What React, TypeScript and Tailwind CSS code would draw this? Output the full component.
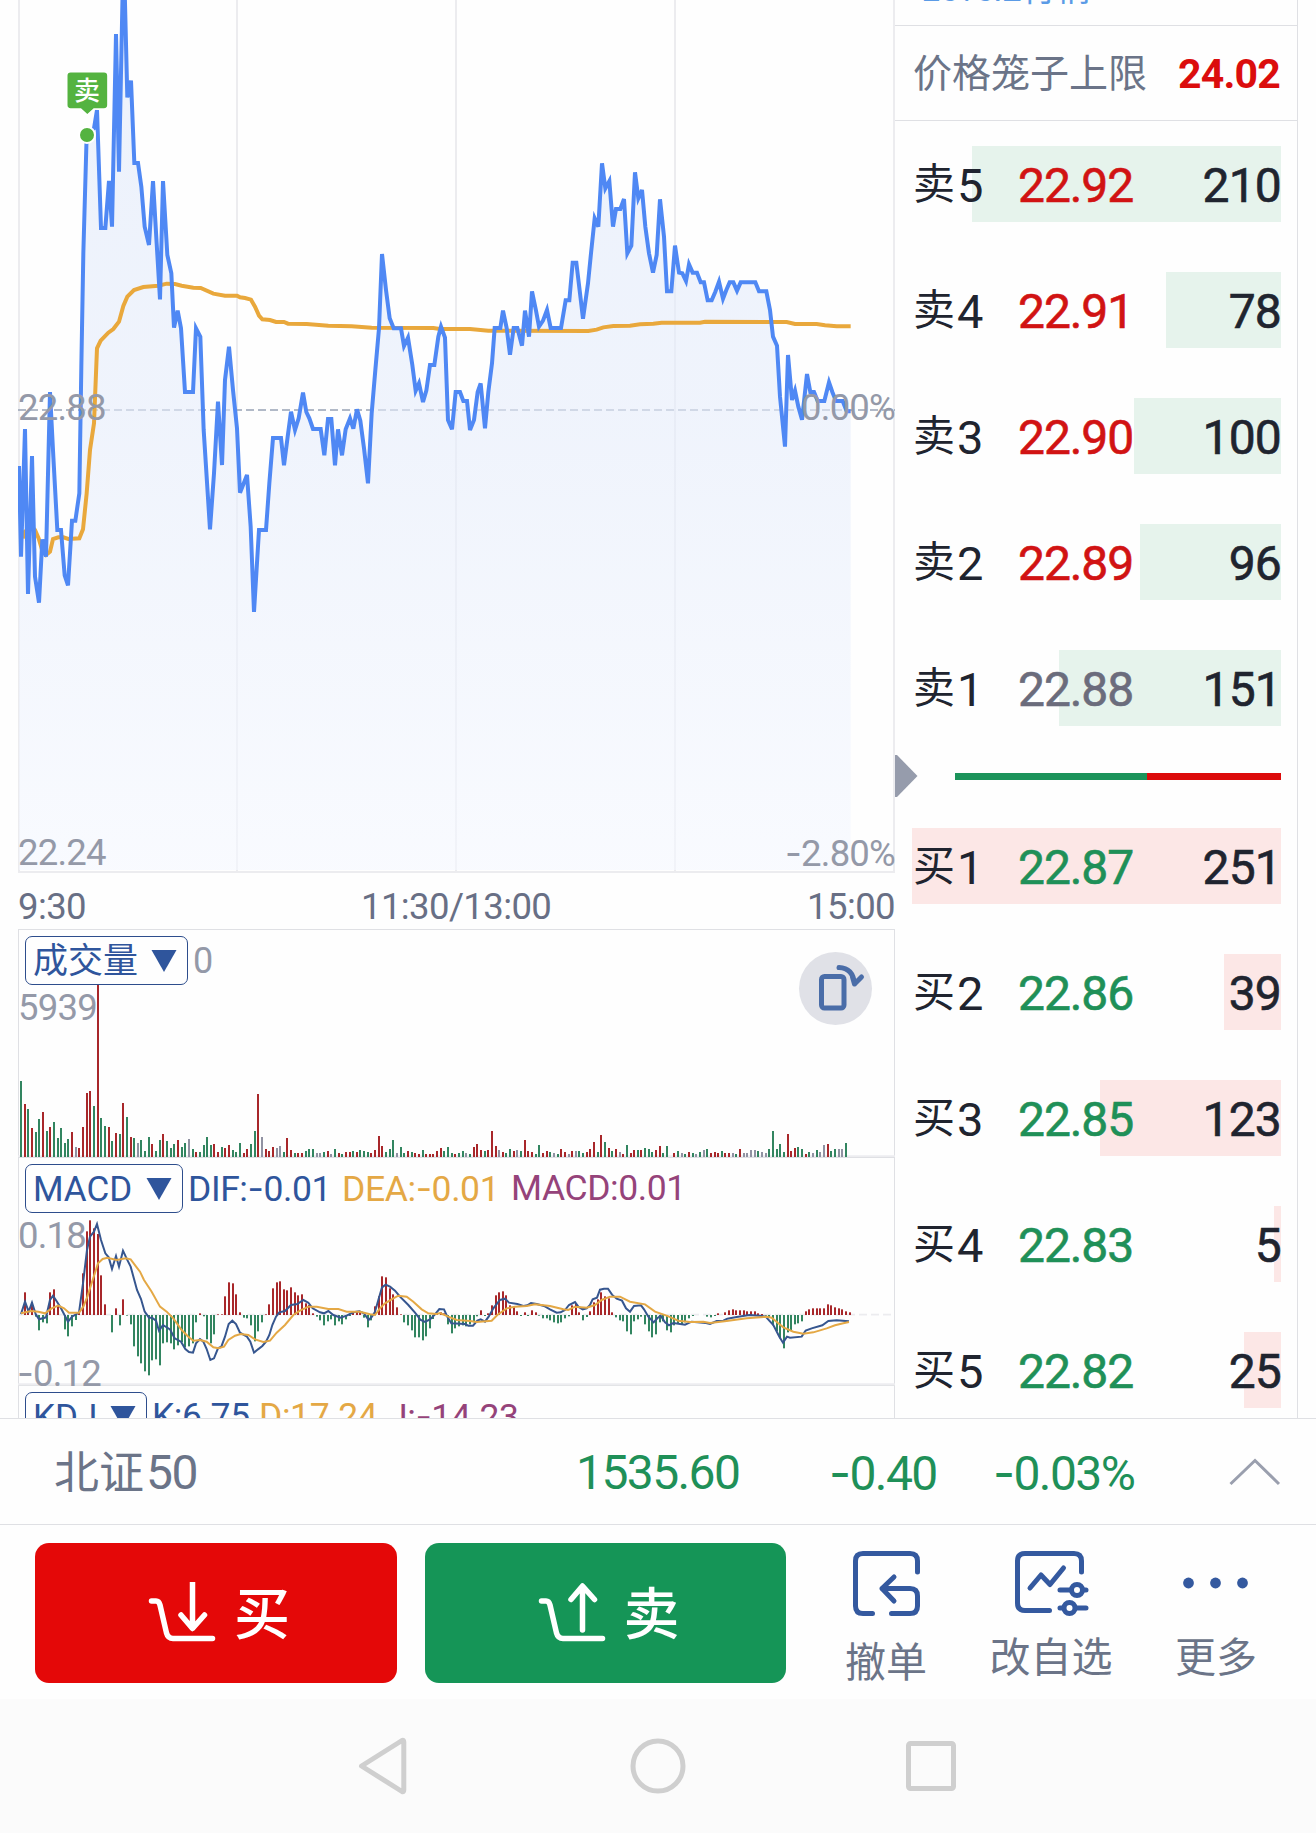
import type { ReactNode } from "react";
import clsx from "clsx";

// Chart data is kept in a 3x pixel space, the svg viewBoxes scale it down.
const PRICE =
  "57,1398 63,1670 75,1287 84,1782 96,1368 105,1730 117,1808 127,1618 138,1670 150,1176 160,1370 172,1590 183,1590 194,1726 204,1756 216,1562 226,1562 238,1480 244,1100 250,760 260,405 282,385 291,330 303,684 316,684 327,543 336,680 348,102 357,515 368,-30 374,-30 382,292 393,242 403,489 414,489 424,560 434,680 447,735 459,543 470,730 480,898 489,543 502,765 514,820 522,983 533,932 543,985 555,1176 579,1176 588,985 601,1010 611,1290 630,1588 642,1420 654,1205 666,1395 675,1140 687,1040 699,1170 711,1285 720,1478 741,1425 752,1580 762,1836 777,1590 798,1590 808,1450 819,1314 843,1314 852,1396 863,1310 873,1235 885,1290 896,1255 909,1178 919,1236 928,1255 939,1287 962,1287 973,1366 984,1257 994,1257 1005,1396 1014,1288 1026,1366 1037,1288 1050,1255 1060,1286 1071,1228 1081,1262 1092,1345 1104,1450 1115,1240 1126,1110 1137,985 1146,762 1158,870 1169,955 1181,985 1203,985 1212,1038 1224,1013 1237,1095 1247,1172 1257,1150 1269,1206 1279,1172 1290,1095 1303,1095 1315,1010 1323,980 1335,1013 1344,1260 1356,1288 1367,1176 1380,1176 1390,1203 1401,1203 1410,1290 1422,1260 1433,1176 1442,1150 1455,1285 1465,1176 1476,1090 1484,984 1501,984 1509,932 1520,984 1530,1064 1541,984 1552,984 1566,1037 1575,932 1587,1010 1596,874 1608,932 1617,980 1629,962 1641,930 1652,984 1683,984 1697,901 1708,901 1718,788 1729,788 1740,880 1749,956 1764,850 1773,760 1784,655 1795,680 1806,490 1816,565 1828,543 1839,680 1848,627 1861,627 1872,597 1882,760 1894,737 1905,517 1915,595 1926,570 1936,680 1947,760 1959,818 1970,765 1980,598 1992,710 2001,874 2014,874 2025,737 2037,818 2047,820 2058,843 2067,793 2078,818 2091,818 2102,847 2112,847 2123,901 2135,901 2146,875 2157,845 2169,896 2179,870 2189,847 2200,847 2211,872 2222,847 2266,847 2277,874 2299,874 2310,930 2319,1010 2331,1037 2340,1190 2355,1340 2364,1065 2376,1200 2385,1172 2395,1220 2406,1259 2421,1122 2431,1176 2442,1176 2453,1203 2473,1203 2487,1147 2497,1176 2508,1203 2528,1203 2540,1234 2552,1234";

const AVERAGE =
  "68,1615 75,1595 96,1582 105,1590 116,1615 127,1652 138,1665 150,1655 159,1617 175,1612 190,1612 205,1617 238,1615 249,1588 260,1480 270,1350 282,1270 291,1045 302,1022 325,998 340,987 357,965 370,918 382,890 402,870 430,861 475,857 500,851 525,852 545,857 580,863 602,864 640,881 675,887 711,887 720,892 735,894 753,899 765,920 777,947 787,958 810,960 828,966 852,966 864,971 920,972 985,977 1055,979 1115,983 1300,984 1320,987 1410,987 1465,992 1765,993 1790,989 1810,982 1840,978 1890,977 1920,973 1960,971 1985,968 2100,968 2115,965 2360,966 2385,972 2450,972 2475,976 2510,979 2552,979";

// r = up, g = down, n = flat
const VOLUME =
  "g228 r159 g144 r87 g75 g114 r135 g78 r90 g105 g57 g87 g42 g54 r75 n30 r27 r90 r192 r198 g153 r516 g117 g93 r90 g48 r72 g69 r162 g120 r60 g57 n42 g51 g18 g60 r39 g18 g51 r69 g48 g27 g39 r51 g30 g42 n54 g24 r15 g15 g36 g60 g36 r39 r15 g30 r27 r36 g21 g15 g42 r12 r24 g39 g78 r189 n60 r24 r18 r30 n27 n33 g15 r57 r21 g12 r12 r12 g18 g24 g24 n12 n12 g15 r18 n9 g24 r12 g9 r15 r15 g18 r15 g21 g18 g15 r12 r21 r63 r33 g15 g24 g51 n12 g30 g12 r18 g15 r12 r9 g21 r9 r9 r9 r18 r27 g18 g30 g12 r9 g12 g18 n12 g9 r30 r39 r21 g18 r21 r78 r33 n21 r15 g12 g24 r18 n21 g18 r51 r18 r15 g9 g36 r12 r18 g15 n12 g9 r24 r15 n9 r18 n18 g18 g12 r15 r24 r45 g15 r66 g45 r27 g18 r24 n15 r9 g36 r12 r21 g21 r21 g27 g24 g15 r21 r33 g12 g33 n0 r12 g18 n12 g9 r15 g12 n9 g15 n21 g24 r12 r15 r12 g18 r12 r12 n12 g9 r24 n12 n12 n21 n21 g18 n15 n12 g24 g78 g24 g39 g15 r69 r18 r27 g30 g24 r9 g15 n12 g21 n15 n36 r39 g18 g24 n24 n24 g42".split(
    " ",
  );

const MACD = [
  0, 68, 15, 35, -5, -46, -22, -25, 68, 77, 30, 0, -43, -64, -34, -15, 8, 125, 251, 284, 260, 243,
  119, 32, 0, -52, 20, -31, 47, -2, -28, -94, -124, -145, -169, -181, -136, -133, -151, -85, -82,
  -85, -103, -91, -82, -97, -94, -85, -22, 5, -4, -73, -85, -58, 2, 2, 56, 98, 95, 62, 8, -8, -10,
  -31, -79, -49, -22, 2, 32, 80, 98, 101, 77, 74, 83, 68, 59, 62, 35, 30, 5, -5, -16, -31, -19, -13,
  -31, -19, -28, -13, -3, 8, 10, 8, -8, -37, -16, 26, 56, 116, 113, 80, 62, 23, 2, -22, -31, -46,
  -67, -67, -76, -64, -40, -12, 3, 8, 5, -28, -55, -40, -34, -31, -34, -28, -22, -4, 14, -3, 5, 29,
  59, 68, 71, 59, 29, 25, 11, -3, 8, -3, 14, 8, -2, -10, -10, -16, -22, -25, -22, -10, -4, 29, 35, 8,
  -16, -6, 11, 38, 47, 68, 56, 50, 8, -7, -16, -19, -49, -58, -19, -13, -5, -28, -49, -67, -58, -22,
  -19, -46, -52, -31, -25, -28, -22, -10, -3, 0, 0, 0, -5, -7, -3, 5, 0, 8, 14, 17, 14, 14, 14, 11,
  11, 11, 5, 3, -2, -8, -31, -49, -70, -100, -52, -46, -28, -25, -19, 11, 17, 20, 20, 20, 20, 32, 29,
  23, 20, 17, 11, 8,
];

const DIF =
  "63,492 75,455 86,485 96,458 107,492 117,508 138,502 150,450 159,437 171,455 183,475 204,515 216,500 237,488 249,400 261,300 270,260 282,245 291,222 303,270 316,310 326,322 336,357 348,318 357,350 369,302 381,328 392,350 411,420 423,447 434,485 447,503 456,503 468,512 477,542 489,525 510,538 524,565 543,575 556,597 567,606 579,608 588,580 600,567 610,575 620,597 631,630 642,625 654,595 664,590 675,560 686,522 697,512 708,522 720,548 741,560 751,575 762,608 774,598 787,588 798,575 808,555 817,525 828,500 838,487 855,483 873,465 892,462 910,450 925,458 938,475 960,487 972,490 985,483 1000,495 1022,503 1040,497 1060,487 1078,484 1092,490 1106,510 1116,500 1125,485 1135,450 1146,412 1157,404 1170,410 1185,422 1200,440 1225,465 1245,488 1262,510 1275,516 1290,508 1305,493 1318,477 1332,478 1342,500 1354,520 1395,522 1405,527 1419,527 1432,512 1442,508 1455,515 1466,500 1480,475 1500,450 1515,446 1527,458 1552,462 1570,468 1582,466 1593,459 1610,462 1632,468 1650,478 1670,488 1682,487 1695,480 1707,465 1725,456 1735,470 1748,478 1760,475 1770,465 1778,448 1791,443 1800,419 1812,416 1824,416 1836,434 1850,446 1866,452 1878,475 1890,485 1902,468 1923,466 1932,478 1945,500 1961,517 1972,505 1982,497 1995,517 2007,526 2020,519 2055,524 2075,515 2118,519 2130,522 2150,513 2170,512 2182,506 2210,501 2248,495 2280,497 2297,500 2320,525 2338,560 2349,578 2361,560 2370,563 2405,560 2417,542 2435,535 2467,526 2485,513 2510,511 2547,514";

const DEA =
  "63,490 93,483 115,485 135,490 155,475 175,467 192,475 207,488 237,488 250,470 262,440 278,390 294,340 308,327 322,323 350,330 377,325 392,328 410,352 420,365 432,390 455,425 480,470 500,485 520,505 545,540 565,560 580,572 600,570 620,575 640,592 655,595 672,590 685,570 705,557 722,552 745,555 765,568 790,576 810,572 830,548 855,525 880,495 900,482 925,470 950,470 985,477 1015,477 1040,485 1080,485 1110,493 1125,495 1140,475 1155,460 1180,445 1195,437 1220,440 1240,455 1265,478 1285,490 1310,492 1320,489 1345,500 1370,510 1410,513 1430,516 1475,512 1492,495 1520,475 1545,470 1580,468 1605,463 1650,468 1690,478 1705,480 1725,470 1760,473 1785,465 1805,450 1830,440 1860,440 1890,455 1935,463 1965,485 2000,497 2035,512 2070,516 2110,515 2130,519 2180,513 2240,505 2300,500 2315,503 2335,520 2350,532 2380,545 2410,551 2440,547 2480,535 2505,526 2530,520 2547,516";

const SELLS = [
  { label: "5", price: "22.92", qty: 210 },
  { label: "4", price: "22.91", qty: 78 },
  { label: "3", price: "22.90", qty: 100 },
  { label: "2", price: "22.89", qty: 96 },
  { label: "1", price: "22.88", qty: 151 },
];

const BUYS = [
  { label: "1", price: "22.87", qty: 251 },
  { label: "2", price: "22.86", qty: 39 },
  { label: "3", price: "22.85", qty: 123 },
  { label: "4", price: "22.83", qty: 5 },
  { label: "5", price: "22.82", qty: 25 },
];

const MAX_QTY = 251;
const PITCH = 10.95;

const barX = (i: number) => Math.round((63 + i * PITCH) / 3) * 3 - 3;

// Inter's hyphen is wider than Roboto's, reads better as a minus sign
function Minus() {
  return <span className="font-[Inter]">-</span>;
}

function Axis({ className, children }: { className: string; children: ReactNode }) {
  return (
    <span
      className={clsx(
        "absolute text-[36.5px] leading-none tracking-[-0.8px] text-[#9499a8]",
        className,
      )}
    >
      {children}
    </span>
  );
}

function PriceChart() {
  return (
    <div className="relative h-[873px]">
      <svg viewBox="54 0 2631 2619" className="block h-[873px] w-[877px]">
        <defs>
          <linearGradient id="area" x1="0" y1="0" x2="0" y2="1">
            <stop offset="0" stopColor="#e0e9fa" stopOpacity="0.6" />
            <stop offset="0.5" stopColor="#e6edfb" stopOpacity="0.6" />
            <stop offset="1" stopColor="#f5f8ff" stopOpacity="0.6" />
          </linearGradient>
        </defs>
        <g stroke="#ececef" strokeWidth="6">
          <path d="M57 0V2616M711 0V2616M1368 0V2616M2025 0V2616M2682 0V2616M54 2616H2685" />
        </g>
        <path d="M54 1230H2685" stroke="#98a3b5" strokeWidth="5" strokeDasharray="24 12" />
        <polygon points={`57,2610 ${PRICE} 2552,2610`} fill="url(#area)" />
        <polyline points={AVERAGE} fill="none" stroke="#e9a83c" strokeWidth="12" />
        <polyline points={PRICE} fill="none" stroke="#4f88f4" strokeWidth="12" />
        {/* trade marker */}
        <circle cx="261" cy="405" r="24" fill="#54b340" stroke="#fff" strokeWidth="6" />
        <path
          d="M212 215H312Q324 215 324 227V315Q324 327 312 327H282L262 345L242 327H212Q200 327 200 315V227Q200 215 212 215Z"
          fill="#54b340"
          stroke="#fff"
          strokeWidth="5"
        />
      </svg>
      <span className="absolute left-[56px] top-[78px] text-[26px] font-medium leading-none text-white">
        卖
      </span>
      <Axis className="left-0 top-[390px]">22.88</Axis>
      <Axis className="right-0 top-[390px]">0.00%</Axis>
      <Axis className="left-0 top-[835px]">22.24</Axis>
      <Axis className="right-0 top-[835px]">
        <Minus />
        2.80%
      </Axis>
    </div>
  );
}

function Picker({ className, children }: { className: string; children: ReactNode }) {
  return (
    <div
      className={clsx(
        "flex h-[49px] shrink-0 items-center justify-between rounded-[7px] border border-[#2d4d8c] bg-[#fefefe] pl-[7px] pr-[10px] text-[#2f559c]",
        className,
      )}
    >
      <span className="pt-[2px] text-[35px] leading-none">{children}</span>
      <svg viewBox="0 0 26 22" className="h-[22px] w-[26px]">
        <path d="M0.5 0H25.5L13 22Z" fill="#2f559c" />
      </svg>
    </div>
  );
}

function VolumePanel() {
  return (
    <div className="relative h-[228px] border-x border-t border-[#dfe0e4]">
      <div className="relative z-10 flex items-center pl-[6px] pt-[6px]">
        <Picker className="w-[163px]">成交量</Picker>
        <span className="ml-[5px] pt-[1px] text-[36px] leading-none text-[#9499a8]">0</span>
      </div>
      <svg
        viewBox="54 2787 2631 687"
        className="absolute -left-px top-[-1px] h-[229px] w-[877px] overflow-visible"
      >
        <path d="M54 3469H2685" stroke="#ededf0" strokeWidth="6" />
        {VOLUME.map((bar, i) => {
          const h = Number(bar.slice(1));
          const fill = bar[0] === "r" ? "#a8272a" : bar[0] === "g" ? "#328560" : "#9092a2";
          return <rect key={i} x={barX(i)} y={3471 - h} width="6" height={h} fill={fill} />;
        })}
      </svg>
      <Axis className="-left-px top-[60px]">5939</Axis>
      <div className="absolute right-[22px] top-[22px] flex h-[73px] w-[73px] items-center justify-center rounded-full bg-[#e0e1e7]">
        <svg
          viewBox="0 0 73 73"
          className="h-[73px] w-[73px]"
          fill="none"
          stroke="#4a6da8"
          strokeWidth="5"
          strokeLinecap="round"
          strokeLinejoin="round"
        >
          <rect x="22.5" y="24.5" width="22.5" height="31.5" rx="3" />
          <path d="M40 15.5Q54 16 55.5 32L62.5 25M55.5 32L53.5 25" />
        </svg>
      </div>
    </div>
  );
}

function MacdPanel() {
  return (
    <div className="relative h-[228px] border-x border-t border-[#dfe0e4]">
      <div className="flex items-center pl-[6px] pt-[6px]">
        <Picker className="w-[158px]">MACD</Picker>
        <div className="flex pt-[2px] text-[35.5px] leading-none tracking-[-0.4px]">
          <span className="ml-[5px] w-[154px] text-[#2f559c]">
            DIF:
            <Minus />
            0.01
          </span>
          <span className="w-[169px] text-[#e4a845]">
            DEA:
            <Minus />
            0.01
          </span>
          <span className="text-[#95437a]">MACD:0.01</span>
        </div>
      </div>
      <svg
        viewBox="54 21 2631 687"
        className="absolute -left-px top-[-1px] h-[229px] w-[877px]"
        fill="none"
      >
        <path d="M54 703H2685" stroke="#ededf0" strokeWidth="6" />
        <path d="M57 494H2685" stroke="#ececef" strokeWidth="5" strokeDasharray="24 12" />
        {MACD.map((v, i) => (
          <rect
            key={i}
            x={barX(i)}
            y={v > 0 ? 495 - v : 495}
            width="6"
            height={Math.abs(v)}
            fill={v > 0 ? "#a8272a" : "#328560"}
          />
        ))}
        <polyline points={DIF} stroke="#36568f" strokeWidth="6" />
        <polyline points={DEA} stroke="#e4a845" strokeWidth="6" />
      </svg>
      <Axis className="-left-px top-[60px]">0.18</Axis>
      <Axis className="-left-[2px] top-[197px]">
        <Minus />
        0.12
      </Axis>
    </div>
  );
}

function KdjPanel() {
  return (
    <div className="h-[33px] overflow-hidden border-x border-t border-[#dfe0e4]">
      <div className="flex items-center pl-[6px] pt-[6px]">
        <Picker className="w-[122px]">KDJ</Picker>
        <div className="flex pt-[1px] text-[35.5px] leading-none tracking-[-0.4px]">
          <span className="ml-[5px] w-[107px] text-[#2f559c]">K:6.75</span>
          <span className="w-[129px] text-[#e4a845]">D:17.24</span>
          <span className="text-[#95437a]">
            J:
            <Minus />
            14.23
          </span>
        </div>
      </div>
    </div>
  );
}

interface OrderRowProps {
  side: "sell" | "buy";
  label: string;
  price: string;
  qty: number;
}

function OrderRow({ side, label, price, qty }: OrderRowProps) {
  const tone =
    price === "22.88" ? "text-[#6b6c7c]" : side === "sell" ? "text-[#d11313]" : "text-[#1f9058]";
  return (
    <div className="relative mb-[50px] flex h-[76px] items-center text-[48px] leading-none text-[#20242f]">
      <div
        className={clsx(
          "absolute inset-y-0 right-0",
          side === "sell" ? "bg-[#e6f3ec]" : "bg-[#fce7e6]",
        )}
        style={{ width: `${(qty / MAX_QTY) * 100}%` }}
      />
      <span className="relative ml-[1px] w-[44px] pt-[2px] text-[42px]">
        {side === "sell" ? "卖" : "买"}
      </span>
      <span className="relative w-[61px] pt-[3px] text-[47px]">{label}</span>
      <span
        className={clsx(
          "relative pt-[3px] tracking-[-1.1px] [-webkit-text-stroke:0.6px_currentColor]",
          tone,
        )}
      >
        {price}
      </span>
      <span className="relative ml-auto pt-[3px] tracking-[-0.8px] [-webkit-text-stroke:0.6px_currentColor]">
        {qty}
      </span>
    </div>
  );
}

function OrderBook() {
  return (
    <div className="relative flex w-[403px] flex-col border-r border-[#dfe0e4]">
      <div className="flex h-[26px] shrink-0 items-start overflow-hidden border-b border-[#dfe0e4] pl-[26px]">
        <span className="-mt-[28px] text-[35px] leading-none text-[#5b9be6]">Level2行情</span>
      </div>
      <div className="flex h-[95px] shrink-0 items-center justify-between border-b border-[#dfe0e4] pl-[18px] pr-[17px]">
        <span className="pt-[2px] text-[39px] leading-none text-[#6b7488]">价格笼子上限</span>
        <span className="pt-[2px] text-[41px] font-bold leading-none tracking-[-0.8px] text-[#db0d0d]">
          24.02
        </span>
      </div>
      <div className="shrink-0 pl-[17px] pr-[16px] pt-[25px]">
        {SELLS.map((row) => (
          <OrderRow key={row.label} side="sell" {...row} />
        ))}
        <div className="mb-[48px] ml-[43px] mt-[-3px] flex h-[7px]">
          <div className="w-[192px] bg-[#1b935a]" />
          <div className="flex-1 bg-[#dc0a0a]" />
        </div>
        {BUYS.map((row) => (
          <OrderRow key={row.label} side="buy" {...row} />
        ))}
      </div>
      <svg viewBox="0 0 23 44" className="absolute left-0 top-[754px] h-[44px] w-[23px]">
        <path d="M0 1H2L22.5 22L2 43H0Z" fill="#969cac" />
      </svg>
    </div>
  );
}

function CartIcon({ up = false }: { up?: boolean }) {
  return (
    <svg
      viewBox="0 0 68 62"
      className="h-[62px] w-[68px]"
      fill="none"
      stroke="#fff"
      strokeWidth="5.5"
      strokeLinecap="round"
      strokeLinejoin="round"
    >
      <path d="M3.5 19H8Q11 19 12 23L18.5 51Q20 56.5 25 56.5H64.5" />
      {up ? (
        <path d="M44.5 48V5M33 17.5L44.5 4L56.5 17.5" />
      ) : (
        <path d="M44.5 0V45M33 33L44.5 46.5L56.5 33" />
      )}
    </svg>
  );
}

function ActionBar() {
  return (
    <div className="flex h-[174px] pl-[35px]">
      <button className="mt-[18px] flex h-[140px] w-[362px] items-center justify-center gap-[18px] rounded-[14px] bg-[#e40808] pl-[6px] text-[56px] font-medium leading-none text-white">
        <CartIcon />
        <span className="pt-[4px]">买</span>
      </button>
      <button className="ml-[28px] mt-[18px] flex h-[140px] w-[361px] items-center justify-center gap-[18px] rounded-[14px] bg-[#159557] pl-[6px] text-[56px] font-medium leading-none text-white">
        <CartIcon up />
        <span className="pt-[4px]">卖</span>
      </button>
      <div className="ml-[46px] flex w-[108px] flex-col items-center pt-[24px] text-[41px] leading-none text-[#6b7488]">
        <svg
          viewBox="0 0 70 68"
          className="h-[68px] w-[70px]"
          fill="none"
          stroke="#34599f"
          strokeWidth="5"
          strokeLinecap="round"
          strokeLinejoin="round"
        >
          <path d="M66.500 23V12Q66.500 4.500 59 4.500H12Q4.500 4.500 4.500 12V57Q4.500 64.500 12 64.500H21.500" />
          <path d="M40.500 64.500H59Q66.500 64.500 66.500 57V47Q66.500 39.500 59 39.500H31M43 28L31 39.500L43 52" />
        </svg>
        <span className="mt-[26px]">撤单</span>
      </div>
      <div className="ml-[48px] flex w-[126px] flex-col items-center pt-[24px] text-[41px] leading-none text-[#6b7488]">
        <svg
          viewBox="0 0 76 68"
          className="h-[68px] w-[76px]"
          fill="none"
          stroke="#34599f"
          strokeWidth="5"
          strokeLinecap="round"
          strokeLinejoin="round"
        >
          <path d="M68.500 23V12Q68.500 4.500 61 4.500H12Q4.500 4.500 4.500 12V54Q4.500 61.500 12 61.500H36.500" />
          <path d="M17 39L28 26L37 35.500L50.500 19" />
          <circle cx="64" cy="41" r="5.500" />
          <circle cx="56.500" cy="59" r="5.500" />
          <path d="M47 41H58M70 41H73M47 59H50.500M62.500 59H73" />
        </svg>
        <span className="mt-[21px]">改自选</span>
      </div>
      <div className="ml-[60px] flex w-[84px] flex-col items-center pt-[24px] text-[41px] leading-none text-[#6b7488]">
        <svg viewBox="0 0 70 68" className="h-[68px] w-[70px]" fill="#34599f">
          <circle cx="7.500" cy="34" r="5.400" />
          <circle cx="34.500" cy="34" r="5.400" />
          <circle cx="61.500" cy="34" r="5.400" />
        </svg>
        <span className="mt-[21px]">更多</span>
      </div>
    </div>
  );
}

function SystemNav() {
  return (
    <div
      className="flex flex-1 items-start bg-[#fbfbfb] pt-[36px]"
    >
      <svg
        viewBox="0 0 60 62"
        className="ml-[352px] h-[62px] w-[60px]"
        fill="none"
        stroke="#cfcfcf"
        strokeWidth="5"
        strokeLinejoin="round"
      >
        <path d="M9.500 31L50 5.500Q51.800 4.500 51.800 7V55Q51.800 57.500 50 56.500Z" />
      </svg>
      <svg
        viewBox="0 0 60 62"
        className="ml-[216px] h-[62px] w-[60px]"
        fill="none"
        stroke="#cfcfcf"
        strokeWidth="5"
      >
        <circle cx="30" cy="31" r="25" />
      </svg>
      <svg
        viewBox="0 0 60 62"
        className="ml-[213px] h-[62px] w-[60px]"
        fill="none"
        stroke="#cfcfcf"
        strokeWidth="5"
      >
        <rect x="7.500" y="8.500" width="45" height="45" rx="2" />
      </svg>
    </div>
  );
}

export default function App() {
  return (
    <div className="flex h-[1833px] w-[1316px] flex-col overflow-hidden bg-[#fefefe] font-[Roboto,'Noto_Sans_CJK_SC',sans-serif]">
      <div className="flex h-[1418px] shrink-0 overflow-hidden pl-[18px]">
        <div className="w-[877px]">
          <PriceChart />
          <div className="relative flex h-[56px] items-center justify-between pt-[12px] text-[36.5px] leading-none tracking-[-0.6px] text-[#686f85]">
            <span>9:30</span>
            <span className="absolute left-[343px]">11:30/13:00</span>
            <span>15:00</span>
          </div>
          <VolumePanel />
          <MacdPanel />
          <KdjPanel />
        </div>
        <OrderBook />
      </div>

      {/* Index ticker */}
      <div className="flex h-[107px] shrink-0 items-center border-y border-[#dfe0e4] pl-[54px] pt-[3px] text-[48px] leading-none tracking-[-1.6px] text-[#1f9058]">
        <div className="flex w-[522px] items-center text-[#6b7488]">
          <span className="text-[45px] tracking-normal">北证</span>
          <span className="ml-[2px]">50</span>
        </div>
        <span className="w-[253px]">1535.60</span>
        <span className="w-[164px]">
          <Minus />
          0.40
        </span>
        <span>
          <Minus />
          0.03%
        </span>
        <svg
          viewBox="0 0 52 28"
          className="-mt-[3px] ml-auto mr-[35px] h-[28px] w-[52px]"
          fill="none"
          stroke="#9a9fae"
          strokeWidth="3"
        >
          <path d="M1.500 26L26 2.500L50 26" />
        </svg>
      </div>

      <ActionBar />
      <SystemNav />
    </div>
  );
}
